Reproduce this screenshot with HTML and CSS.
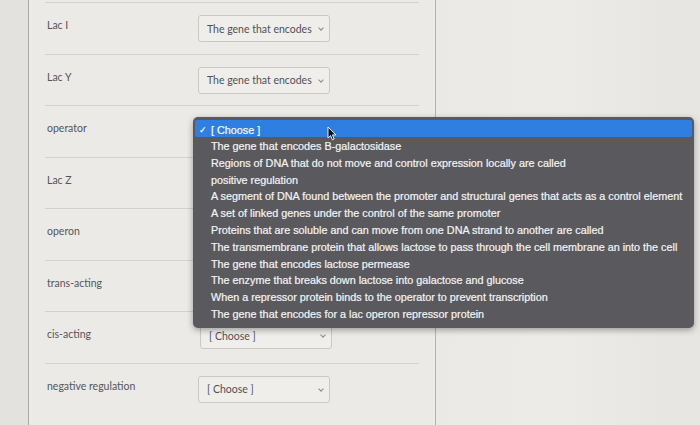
FILE: index.html
```html
<!DOCTYPE html>
<html>
<head>
<meta charset="utf-8">
<link rel="stylesheet" href="styles.css">
</head>
<body>
<div class="screen">
  <div class="panel">
    <div class="row"><div class="label">Lac I</div><div class="select">The gene that encodes<span class="chev"></span></div></div>
    <div class="row"><div class="label">Lac Y</div><div class="select">The gene that encodes<span class="chev"></span></div></div>
    <div class="row"><div class="label">operator</div></div>
    <div class="row"><div class="label">Lac Z</div></div>
    <div class="row"><div class="label">operon</div></div>
    <div class="row"><div class="label">trans-acting</div></div>
    <div class="row"><div class="label">cis-acting</div><div class="select cis">[ Choose ]<span class="chev"></span></div></div>
    <div class="row"><div class="label">negative regulation</div><div class="select">[ Choose ]<span class="chev"></span></div></div>
  </div>
  <div class="menu">
    <div class="item selected"><span class="check">✓</span>[ Choose ]</div>
    <div class="item">The gene that encodes B-galactosidase</div>
    <div class="item">Regions of DNA that do not move and control expression locally are called</div>
    <div class="item">positive regulation</div>
    <div class="item">A segment of DNA found between the promoter and structural genes that acts as a control element</div>
    <div class="item">A set of linked genes under the control of the same promoter</div>
    <div class="item">Proteins that are soluble and can move from one DNA strand to another are called</div>
    <div class="item">The transmembrane protein that allows lactose to pass through the cell membrane an into the cell</div>
    <div class="item">The gene that encodes lactose permease</div>
    <div class="item">The enzyme that breaks down lactose into galactose and glucose</div>
    <div class="item">When a repressor protein binds to the operator to prevent transcription</div>
    <div class="item">The gene that encodes for a lac operon repressor protein</div>
  </div>
  <svg class="cursor" width="10" height="15" viewBox="0 0 10 15"><path d="M1 1 L1 12 L3.6 9.6 L5.4 13.8 L7.2 13 L5.4 8.9 L8.8 8.9 Z" fill="#111" stroke="#fff" stroke-width="0.9" stroke-linejoin="round"/></svg>
</div>
</body>
</html>
```
FILE: styles.css
```css
html, body {
  margin: 0;
  padding: 0;
}
body {
  width: 700px;
  height: 425px;
  overflow: hidden;
  background: #e5e4e0;
  font-family: Lato, "Liberation Sans", sans-serif;
}
.screen {
  position: relative;
  width: 700px;
  height: 425px;
  background: linear-gradient(90deg, #e3e2de 0%, #e8e7e3 40%, #ecebe7 80%, #e6e5e1 100%);
}
.panel {
  margin-left: 28px;
  width: 408px;
  height: 425px;
  box-sizing: border-box;
  border-left: 1px solid #a9a9a7;
  border-right: 1px solid #b4b4b1;
  background: #ebeae6;
  padding-top: 2px;
}
.row {
  margin: 0 16px 0 16px;
  height: 51.5px;
  box-sizing: border-box;
  border-top: 1px solid #d2d1cd;
  display: flex;
  align-items: flex-start;
  padding-top: 12px;
}
.label {
  width: 151px;
  padding-left: 2px;
  margin-top: 3px;
  font-size: 10.5px;
  line-height: 14px;
  color: #55555a;
}
.select {
  width: 132px;
  height: 27px;
  box-sizing: border-box;
  border: 1px solid #c9c8c4;
  border-radius: 3px;
  background: #efeeea;
  font-size: 10.5px;
  color: #505056;
  padding-left: 8px;
  display: flex;
  align-items: center;
  position: relative;
}
.select.cis {
  margin-top: -2px;
  margin-left: 2px;
}
.chev {
  position: absolute;
  right: 6px;
  top: 10px;
  width: 3px;
  height: 3px;
  border-right: 1px solid #8a8a8e;
  border-bottom: 1px solid #8a8a8e;
  transform: rotate(45deg);
}
.menu {
  position: absolute;
  left: 193px;
  top: 117px;
  width: 501px;
  height: 211px;
  box-sizing: border-box;
  padding: 3px 2px 2px;
  background: #5a5a5e;
  border-radius: 5px;
  box-shadow: 0 2px 6px rgba(0,0,0,0.35);
  font-family: "Liberation Sans", Arial, sans-serif;
  font-size: 10.8px;
  color: #f4f4f4;
  -webkit-text-stroke: 0.2px #f4f4f4;
}
.item {
  height: 16.8px;
  line-height: 16.8px;
  padding-left: 16px;
  white-space: nowrap;
  position: relative;
}
.item.selected {
  height: 17px;
  line-height: 20px;
  background: #2f7fe3;
  border-radius: 2px;
  color: #ffffff;
  margin-bottom: 1px;
}
.check {
  position: absolute;
  left: 4px;
  top: 0;
  font-size: 9px;
}
.cursor {
  position: absolute;
  left: 327px;
  top: 126px;
}
```
